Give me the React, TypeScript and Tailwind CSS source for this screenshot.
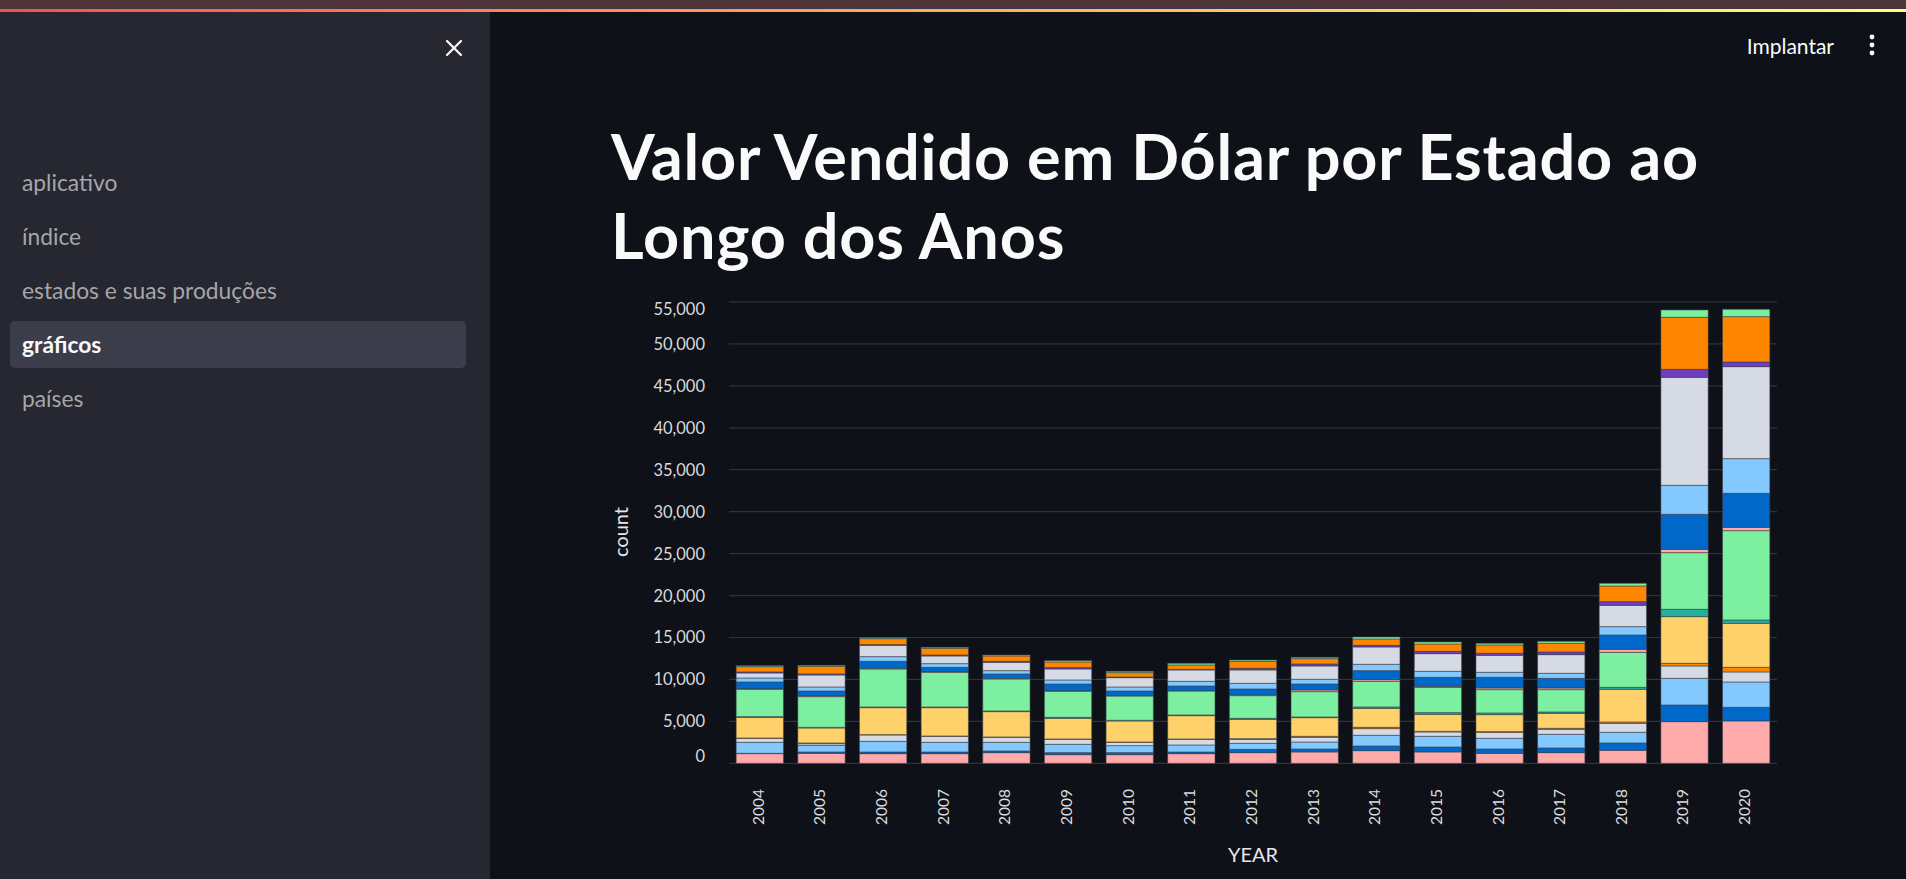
import type { ReactNode } from 'react';

const YEARS = [2004, 2005, 2006, 2007, 2008, 2009, 2010, 2011, 2012, 2013, 2014, 2015, 2016, 2017, 2018, 2019, 2020];

// stack order, bottom to top
const COLORS = [
    '#ffabab', '#0068c9', '#83c9ff', '#d5dae5', '#ff8700',
    '#ffd16a', '#29b09d', '#7defa1', '#ffabab', '#0068c9',
    '#83c9ff', '#d5dae5', '#6d3fc0', '#ff8700', '#7defa1',
];

// sold value per state, in units of ~39.74 USD
const RAW = [
    [29, 1, 33, 12, 1, 62, 2, 82, 2, 20, 12, 15, 3, 16, 3],
    [30, 4, 20, 5, 2, 45, 2, 92, 2, 15, 12, 36, 3, 23, 3],
    [29, 5, 32, 19, 1, 81, 2, 114, 2, 21, 14, 34, 2, 18, 3],
    [29, 5, 29, 18, 1, 85, 2, 104, 2, 13, 11, 23, 3, 20, 3],
    [32, 5, 26, 15, 1, 76, 2, 96, 2, 13, 10, 25, 3, 16, 3],
    [26, 6, 25, 15, 1, 62, 3, 78, 2, 20, 12, 33, 4, 17, 4],
    [26, 6, 21, 10, 1, 63, 2, 73, 1, 14, 12, 28, 2, 13, 4],
    [29, 5, 21, 17, 1, 70, 2, 72, 1, 14, 14, 34, 2, 13, 5],
    [32, 10, 18, 12, 2, 58, 3, 68, 2, 18, 17, 40, 5, 21, 4],
    [34, 9, 21, 14, 3, 56, 2, 76, 5, 18, 14, 40, 6, 16, 4],
    [38, 14, 32, 20, 4, 57, 4, 77, 5, 27, 19, 52, 5, 19, 6],
    [34, 15, 32, 13, 2, 51, 5, 76, 3, 27, 18, 53, 7, 22, 6],
    [30, 13, 32, 18, 2, 51, 5, 70, 5, 32, 15, 51, 6, 25, 5],
    [32, 14, 41, 15, 3, 45, 4, 67, 5, 29, 15, 56, 8, 26, 6],
    [39, 22, 32, 27, 4, 98, 6, 105, 9, 43, 25, 64, 11, 47, 8],
    [125, 50, 80, 37, 8, 140, 22, 170, 10, 105, 87, 324, 24, 156, 22],
    [127, 41, 76, 30, 14, 132, 10, 268, 10, 102, 104, 276, 14, 136, 22],
];

const SALES = RAW.map((row) => row.map((u) => u * 39.74));

const NAV = ['aplicativo', 'índice', 'estados e suas produções', 'gráficos', 'países'];

const FONT = 'font-["Source_Sans_Pro",Lato,"Noto_Sans",sans-serif]';

export default function App() {
    return (
        <div className={`h-[879px] w-full overflow-hidden flex flex-col bg-[#0e1117] ${FONT}`}>
            <div className="h-[7px] bg-[#4f3539]" />
            <div className="h-[2px] bg-[#3d393e]" />
            <div className="h-[3px] bg-gradient-to-r from-[#ff4b4b] to-[#fffd80]" />
            <div className="flex flex-1 min-h-0">
                <Sidebar />
                <main className="flex-1 min-w-0 flex flex-col">
                    <header className="h-[66px] flex items-center justify-end gap-[34px] pr-[30px]">
                        <span className="text-[21px] text-[#fafafa] leading-none">Implantar</span>
                        <KebabIcon />
                    </header>
                    <div className="pl-[101px]">
                        <h1 className="mt-[38px] pl-[20px] text-[63px] leading-[79px] font-bold text-[#fafafa] tracking-[0.8px]">
                            Valor Vendido em Dólar por Estado ao
                            <br />
                            Longo dos Anos
                        </h1>
                        <div className="mt-[16px]">
                            <StackedChart />
                        </div>
                    </div>
                </main>
            </div>
        </div>
    );
}

function Sidebar() {
    return (
        <aside className="w-[490px] shrink-0 bg-[#262730] flex flex-col">
            <div className="h-[72px] flex items-center justify-end pr-[27px]">
                <CloseIcon />
            </div>
            <nav className="mt-[75px] px-[10px] flex flex-col gap-[7px] w-[476px]">
                {NAV.map((item) => (
                    <NavItem key={item} active={item === 'gráficos'}>{item}</NavItem>
                ))}
            </nav>
        </aside>
    );
}

function NavItem({ active, children }: { active?: boolean; children: ReactNode }) {
    return (
        <div
            className={
                active
                    ? 'h-[47px] rounded-[5px] bg-[#3c3d4a] pl-[12px] flex items-center text-[22.8px] font-bold text-[#fafafa]'
                    : 'h-[47px] rounded-[5px] pl-[12px] flex items-center text-[22.8px] text-[#a5a6aa]'
            }
        >
            {children}
        </div>
    );
}

function CloseIcon() {
    return (
        <svg width="18" height="18" viewBox="0 0 18 18" fill="none">
            <path d="M2 2 L16 16 M16 2 L2 16" stroke="#fafafa" strokeWidth="2.2" strokeLinecap="round" />
        </svg>
    );
}

function KebabIcon() {
    return (
        <svg width="8" height="24" viewBox="0 0 8 24" fill="#fafafa">
            <circle cx="4" cy="4" r="2.4" />
            <circle cx="4" cy="12" r="2.4" />
            <circle cx="4" cy="20" r="2.4" />
        </svg>
    );
}

function StackedChart() {
    const width = 1194;
    const height = 589;
    const plotL = 118;
    const plotR = 1166;
    const y0 = 473.3;
    const pxPerVal = 41.94 / 5000;
    const step = (plotR - plotL) / YEARS.length;
    const barW = 47.3;
    const ticks = Array.from({ length: 12 }, (_, i) => i * 5000);

    const y = (v: number) => y0 - v * pxPerVal;

    return (
        <svg width={width} height={height} className="block" style={{ fontFamily: '"Source Sans Pro", Lato, sans-serif' }}>
            <g transform="translate(20 0)">
                {ticks.map((t) => (
                    <line key={t} x1={plotL} x2={plotR} y1={y(t)} y2={y(t)} stroke="#30323a" strokeWidth="1.2" />
                ))}
                {ticks.map((t, i) => {
                    const ty = y(t);
                    const dy = i === 0 ? -1 : i === ticks.length - 1 ? 13 : 6;
                    return (
                        <text key={t} x={94} y={ty + dy} textAnchor="end" fontSize="16.5" fill="#d9dadd">
                            {t.toLocaleString('en-US')}
                        </text>
                    );
                })}
                <text
                    x={12}
                    y={242}
                    transform="rotate(-90 12 242)"
                    textAnchor="middle"
                    dominantBaseline="middle"
                    fontSize="20"
                    fill="#e6e7ea"
                >
                    count
                </text>

                {SALES.map((row, bi) => {
                    const x = plotL + bi * step + (step - barW) / 2;
                    let acc = 0;
                    return (
                        <g key={YEARS[bi]}>
                            {row.map((v, si) => {
                                const top = y(acc + v);
                                const h = v * pxPerVal;
                                acc += v;
                                return (
                                    <rect
                                        key={si}
                                        x={x}
                                        y={top}
                                        width={barW}
                                        height={h}
                                        fill={COLORS[si]}
                                        stroke="#3c3f4a"
                                        strokeOpacity="0.55"
                                        strokeWidth="1"
                                    />
                                );
                            })}
                        </g>
                    );
                })}

                {YEARS.map((yr, bi) => {
                    const cx = plotL + bi * step + step / 2;
                    return (
                        <text
                            key={yr}
                            x={cx}
                            y={499}
                            transform={`rotate(-90 ${cx} 499)`}
                            textAnchor="end"
                            dominantBaseline="middle"
                            fontSize="15.5"
                            fill="#d9dadd"
                        >
                            {yr}
                        </text>
                    );
                })}
                <text x={642} y={567} textAnchor="middle" dominantBaseline="middle" fontSize="20" fill="#e6e7ea">
                    YEAR
                </text>
            </g>
        </svg>
    );
}
